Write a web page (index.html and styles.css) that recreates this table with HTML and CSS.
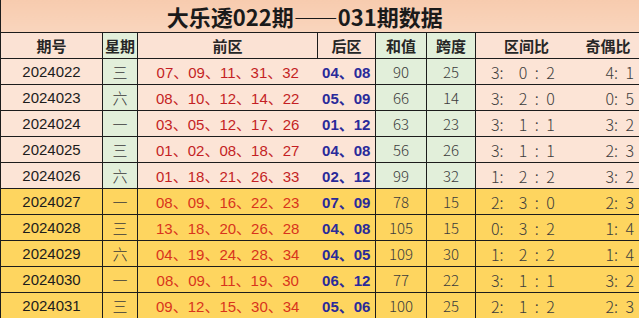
FILE: index.html
```html
<!DOCTYPE html>
<html lang="zh">
<head>
<meta charset="utf-8">
<link rel="stylesheet" href="styles.css">
</head>
<body>
<table class="lotto">
  <colgroup>
    <col class="c-no"><col class="c-wd"><col class="c-front"><col class="c-back">
    <col class="c-sum"><col class="c-span"><col class="c-zone"><col class="c-odd">
  </colgroup>
  <thead>
    <tr class="title-row"><th colspan="8" class="title">大乐透022期——031期数据</th></tr>
    <tr class="head">
      <th>期号</th><th class="g">星期</th><th>前区</th><th>后区</th>
      <th class="g">和值</th><th class="g">跨度</th><th class="zone">区间比</th><th class="odd">奇偶比</th>
    </tr>
  </thead>
  <tbody>
    <tr class="pk"><td class="no">2024022</td><td class="wd g">三</td><td class="front">07、09、11、31、32</td><td class="back">04、08</td><td class="num g">90</td><td class="num g">25</td><td class="zone">3:  0 : 2</td><td class="odd">4: 1</td></tr>
    <tr class="pk"><td class="no">2024023</td><td class="wd g">六</td><td class="front">08、10、12、14、22</td><td class="back">05、09</td><td class="num g">66</td><td class="num g">14</td><td class="zone">3:  2 : 0</td><td class="odd">0: 5</td></tr>
    <tr class="pk"><td class="no">2024024</td><td class="wd g">一</td><td class="front">03、05、12、17、26</td><td class="back">01、12</td><td class="num g">63</td><td class="num g">23</td><td class="zone">3:  1 : 1</td><td class="odd">3: 2</td></tr>
    <tr class="pk"><td class="no">2024025</td><td class="wd g">三</td><td class="front">01、02、08、18、27</td><td class="back">04、08</td><td class="num g">56</td><td class="num g">26</td><td class="zone">3:  1 : 1</td><td class="odd">2: 3</td></tr>
    <tr class="pk"><td class="no">2024026</td><td class="wd g">六</td><td class="front">01、18、21、26、33</td><td class="back">02、12</td><td class="num g">99</td><td class="num g">32</td><td class="zone">1:  2 : 2</td><td class="odd">3: 2</td></tr>
    <tr class="yl"><td class="no">2024027</td><td class="wd">一</td><td class="front">08、09、16、22、23</td><td class="back">07、09</td><td class="num">78</td><td class="num">15</td><td class="zone">2:  3 : 0</td><td class="odd">2: 3</td></tr>
    <tr class="yl"><td class="no">2024028</td><td class="wd">三</td><td class="front">13、18、20、26、28</td><td class="back">04、08</td><td class="num">105</td><td class="num">15</td><td class="zone">0:  3 : 2</td><td class="odd">1: 4</td></tr>
    <tr class="yl"><td class="no">2024029</td><td class="wd">六</td><td class="front">04、19、24、28、34</td><td class="back">04、05</td><td class="num">109</td><td class="num">30</td><td class="zone">1:  2 : 2</td><td class="odd">1: 4</td></tr>
    <tr class="yl"><td class="no">2024030</td><td class="wd">一</td><td class="front">08、09、11、19、30</td><td class="back">06、12</td><td class="num">77</td><td class="num">22</td><td class="zone">3:  1 : 1</td><td class="odd">3: 2</td></tr>
    <tr class="yl"><td class="no">2024031</td><td class="wd">三</td><td class="front">09、12、15、30、34</td><td class="back">05、06</td><td class="num">100</td><td class="num">25</td><td class="zone">2:  1 : 2</td><td class="odd">2: 3</td></tr>
  </tbody>
</table>
</body>
</html>
```

FILE: styles.css
```css
html, body {
  margin: 0;
  padding: 0;
  overflow: hidden;
  background: #fce4d6;
}
.lotto {
  table-layout: fixed;
  width: 639px;
  border-collapse: collapse;
  font-family: "Liberation Sans", "Noto Sans CJK SC", sans-serif;
  font-size: 15px;
  color: #1e1e1e;
}
.c-no { width: 102px; }
.c-wd { width: 35px; }
.c-front { width: 180px; }
.c-back { width: 58px; }
.c-sum { width: 51px; }
.c-span { width: 49px; }
.c-zone { width: 105px; }
.c-odd { width: 59px; }

.lotto th, .lotto td {
  border: 1px solid #1c1c1c;
  padding: 0;
  text-align: center;
  white-space: nowrap;
  overflow: hidden;
}
.lotto tr > :last-child { border-right: none; }
.title-row th {
  height: 32px;
  background: linear-gradient(#f7cbae, #f9d5bd);
  font-family: "Noto Sans CJK SC", sans-serif;
  font-size: 22px;
  font-weight: 700;
  color: #1a1a1a;
  padding-right: 31px;
  border-top: none;
}
.head th {
  height: 25px;
  background: #fbe2d4;
  font-family: "Noto Sans CJK SC", sans-serif;
  font-size: 15px;
  font-weight: 700;
  color: #262626;
}
.head th.g { background: #e2efda; }
tbody tr { height: 26px; }
tbody td { height: 25px; }
.pk td { background: #fce4d6; }
.pk td.g { background: #e2efda; }
.yl td { background: #fed55f; }

.no { color: #1c1c1c; }
.wd {
  font-family: "Noto Sans CJK SC", sans-serif;
  font-weight: 300;
  color: #3a3a3a;
}
.front {
  color: #c41f24;
}
.yl .front { color: #d8341c; }
tbody td.front { border-right: hidden; }
.back {
  color: #2a2a9a;
  font-weight: 700;
}
.num {
  font-family: "Noto Sans CJK SC", sans-serif;
  font-weight: 300;
  color: #3c3c3c;
}
.zone, .odd {
  font-family: "Noto Sans CJK SC", sans-serif;
  font-weight: 300;
  color: #3c3c3c;
}
.lotto .zone { border-right: hidden; }
.lotto td.zone, .lotto td.odd {
  white-space: pre;
  word-spacing: 4px;
  font-size: 16px;
  text-align: left;
}
.lotto td.zone { padding-left: 15px; }
.lotto td.odd { padding-left: 25px; }
.lotto th.zone { text-align: left; padding-left: 28px; }
.lotto th.odd { text-align: left; padding-left: 5px; }
```
